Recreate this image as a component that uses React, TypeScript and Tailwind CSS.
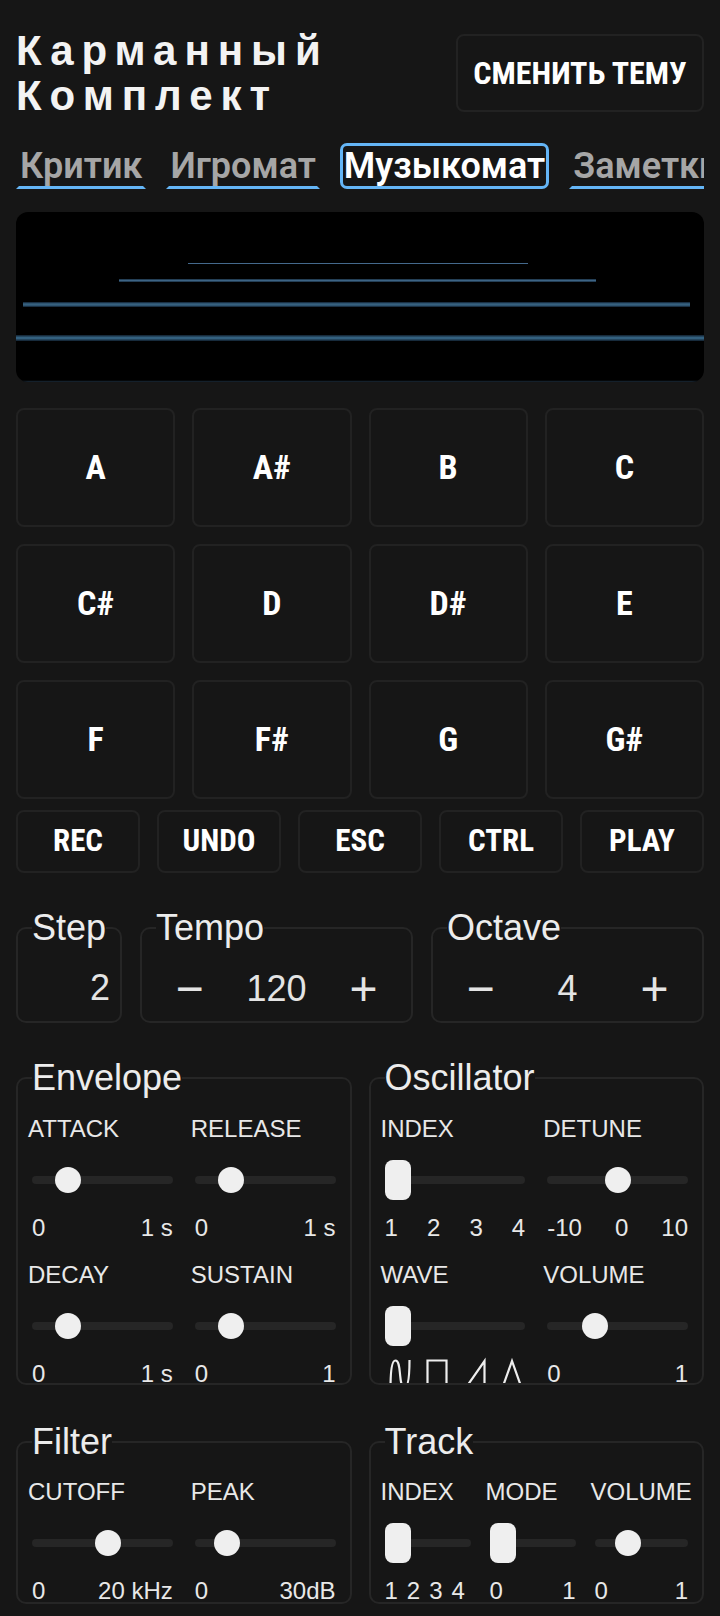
import React from "react";

// fonts
const SANS = "font-['Liberation_Sans',Arial,sans-serif]";
const COND = "font-['Roboto_Condensed','Liberation_Sans_Narrow','DejaVu_Sans_Condensed',sans-serif]";
const ROBOTO = "font-['Roboto','Liberation_Sans',sans-serif]";

const tabs = [
  { name: "Критик" },
  { name: "Игромат" },
  { name: "Музыкомат", active: true },
  { name: "Заметки" },
];

const notes = ["A", "A#", "B", "C", "C#", "D", "D#", "E", "F", "F#", "G", "G#"];
const actions = ["REC", "UNDO", "ESC", "CTRL", "PLAY"];

type Ctl = {
  label: string;
  value: number;
  rect?: boolean;
  marks?: string[];
  tight?: boolean;
  waves?: boolean;
};

const envelope: Ctl[] = [
  { label: "ATTACK", value: 0.2, marks: ["0", "1 s"] },
  { label: "RELEASE", value: 0.2, marks: ["0", "1 s"] },
  { label: "DECAY", value: 0.2, marks: ["0", "1 s"] },
  { label: "SUSTAIN", value: 0.2, marks: ["0", "1"] },
];

const oscillator: Ctl[] = [
  { label: "INDEX", value: 0, rect: true, marks: ["1", "2", "3", "4"] },
  { label: "DETUNE", value: 0.5, marks: ["-10", "0", "10"] },
  { label: "WAVE", value: 0, rect: true, waves: true },
  { label: "VOLUME", value: 0.3, marks: ["0", "1"] },
];

const filter: Ctl[] = [
  { label: "CUTOFF", value: 0.55, marks: ["0", "20 kHz"] },
  { label: "PEAK", value: 0.17, marks: ["0", "30dB"] },
];

const track: Ctl[] = [
  { label: "INDEX", value: 0, rect: true, marks: ["1", "2", "3", "4"], tight: true },
  { label: "MODE", value: 0, rect: true, marks: ["0", "1"] },
  { label: "VOLUME", value: 0.3, marks: ["0", "1"] },
];

function Slider({ value, rect }: { value: number; rect?: boolean }) {
  const left = `calc((100% - 26px) * ${value})`;
  return (
    <div className="relative mx-1 flex h-[40px] items-center">
      <div className="h-[8px] w-full rounded-full bg-[#262626]" />
      {rect ? (
        <div className="absolute top-0 h-[40px] w-[26px] rounded-[8px] bg-[#efefef]" style={{ left }} />
      ) : (
        <div className="absolute top-[7px] h-[26px] w-[26px] rounded-full bg-[#efefef]" style={{ left }} />
      )}
    </div>
  );
}

function Waves() {
  const cls = "h-[30px] w-[22px] overflow-visible";
  return (
    <div className="mt-[13px] flex justify-between pl-[8px] pr-[6px]">
      <svg viewBox="0 0 22 30" className={cls} fill="none" stroke="#eeeeee" strokeWidth="2.2">
        <path d="M1.5 30 C1.5 12 3 1.5 6.5 1.5 C10 1.5 10.5 10 11 15 C11.5 20 12 28.5 15.5 28.5 C19 28.5 20.5 18 20.5 1" />
      </svg>
      <svg viewBox="0 0 22 30" className={cls} fill="none" stroke="#eeeeee" strokeWidth="2.2">
        <path d="M1.5 30 V1.5 H20.5 V30" />
      </svg>
      <svg viewBox="0 0 22 30" className={cls} fill="none" stroke="#eeeeee" strokeWidth="2.2">
        <path d="M1 30 L20.5 2 V30" />
      </svg>
      <svg viewBox="0 0 22 30" className={cls} fill="none" stroke="#eeeeee" strokeWidth="2.2">
        <path d="M1 30 L11 2 L21 30" />
      </svg>
    </div>
  );
}

function Control({ c }: { c: Ctl }) {
  return (
    <div className="min-w-0">
      <div className="h-[26px] whitespace-nowrap text-[24px] leading-[26px]">{c.label}</div>
      <div className="mt-[18px]">
        <Slider value={c.value} rect={c.rect} />
      </div>
      {c.waves ? (
        <Waves />
      ) : (
        <div
          className={
            c.tight
              ? "mt-[19px] flex gap-[9px] whitespace-nowrap px-1 text-[24px] leading-[18px]"
              : "mt-[19px] flex justify-between whitespace-nowrap px-1 text-[24px] leading-[18px]"
          }
        >
          {c.marks?.map((m) => (
            <span key={m}>{m}</span>
          ))}
        </div>
      )}
    </div>
  );
}

function Group({ title, children, inner }: { title: string; children: React.ReactNode; inner: string }) {
  return (
    <fieldset className="min-w-0 rounded-[10px] border-2 border-[#262626]">
      <legend className="ml-[14px] text-[36px] leading-[40px] text-[#ececec]">{title}</legend>
      <div className={inner}>{children}</div>
    </fieldset>
  );
}

function Visualizer() {
  return (
    <div className="mt-[23px] h-[170px] overflow-hidden rounded-[12px] bg-black">
      <svg viewBox="0 0 688 170" preserveAspectRatio="none" className="block h-full w-full">
        <line x1="172" y1="51.5" x2="512" y2="51.5" stroke="#44698c" strokeWidth="1.2" />
        <line x1="103" y1="68.5" x2="580" y2="68.5" stroke="#1c3347" strokeWidth="3" />
        <line x1="103" y1="68.5" x2="580" y2="68.5" stroke="#3d6485" strokeWidth="1.4" />
        <line x1="7" y1="92.5" x2="674" y2="92.5" stroke="#1a3044" strokeWidth="5" />
        <line x1="7" y1="92.5" x2="674" y2="92.5" stroke="#36607f" strokeWidth="2.4" />
        <line x1="0" y1="126" x2="688" y2="126" stroke="#172b3c" strokeWidth="6" />
        <line x1="0" y1="126" x2="688" y2="126" stroke="#33607f" strokeWidth="3" />
        <line x1="0" y1="169.5" x2="688" y2="169.5" stroke="#14202b" strokeWidth="1.5" />
      </svg>
    </div>
  );
}

export default function App() {
  return (
    <div className={`min-h-screen bg-[#161616] px-4 pb-[12px] text-[#e8e8e8] ${SANS}`}>
      {/* Header */}
      <div className="flex items-center justify-between pt-[28px]">
        <h1 className="text-[42px] font-bold leading-[45px] tracking-[0.19em] text-[#f3f3f3]">
          Карманный
          <br />
          Комплект
        </h1>
        <button
          className={`h-[78px] w-[248px] rounded-[8px] border-2 border-[#222222] text-[32px] font-bold text-white ${COND}`}
        >
          СМЕНИТЬ ТЕМУ
        </button>
      </div>

      {/* Tabs */}
      <div className={`mt-[25px] flex gap-[20px] overflow-hidden whitespace-nowrap ${ROBOTO}`}>
        {tabs.map((t) => (
          <div
            key={t.name}
            className={
              t.active
                ? "h-[46px] shrink-0 rounded-[7px] border-[3px] border-[#64b5f6] px-[1px] text-[36px] font-semibold leading-[40px] text-white"
                : "h-[46px] shrink-0 border-[3px] border-transparent border-b-[#64b5f6] px-[1px] text-[36px] font-semibold leading-[40px] text-[#a6a6a6]"
            }
          >
            {t.name}
          </div>
        ))}
      </div>

      <Visualizer />

      {/* Note pads */}
      <div className={`mt-[26px] grid grid-cols-4 gap-[17px] ${COND}`}>
        {notes.map((n) => (
          <button
            key={n}
            className="flex h-[119px] items-center justify-center rounded-[8px] border-2 border-[#222222] text-[34px] font-bold text-white"
          >
            {n}
          </button>
        ))}
      </div>

      {/* Transport */}
      <div className={`mt-[11px] grid grid-cols-5 gap-[17px] ${COND}`}>
        {actions.map((a) => (
          <button
            key={a}
            className="flex h-[63px] items-center justify-center rounded-[8px] border-2 border-[#222222] text-[31px] font-bold text-white"
          >
            {a}
          </button>
        ))}
      </div>

      {/* Step / Tempo / Octave */}
      <div className="mt-[35px] grid grid-cols-[106px_1fr_1fr] gap-[18px]">
        <Group title="Step" inner="h-[73px] pr-[10px] pt-[20px] text-right text-[36px] leading-[40px] text-[#e4e4e4]">
          2
        </Group>
        <Group title="Tempo" inner="grid h-[73px] grid-cols-3 items-center px-[4px] pt-[14px] pb-[6px] text-center text-[36px] leading-[40px] text-[#e4e4e4]">
          <span className="text-[48px]">−</span>
          <span>120</span>
          <span className="text-[48px]">+</span>
        </Group>
        <Group title="Octave" inner="grid h-[73px] grid-cols-3 items-center px-[4px] pt-[14px] pb-[6px] text-center text-[36px] leading-[40px] text-[#e4e4e4]">
          <span className="text-[48px]">−</span>
          <span>4</span>
          <span className="text-[48px]">+</span>
        </Group>
      </div>

      {/* Envelope / Oscillator */}
      <div className="mt-[35px] grid grid-cols-2 gap-[17px]">
        <Group title="Envelope" inner="grid h-[285px] grid-cols-2 content-start gap-x-[14px] gap-y-[25px] overflow-hidden px-[10px] pt-[18px]">
          {envelope.map((c) => (
            <Control key={c.label} c={c} />
          ))}
        </Group>
        <Group title="Oscillator" inner="grid h-[285px] grid-cols-2 content-start gap-x-[14px] gap-y-[25px] overflow-hidden px-[10px] pt-[18px]">
          {oscillator.map((c) => (
            <Control key={c.label} c={c} />
          ))}
        </Group>
      </div>

      {/* Filter / Track */}
      <div className="mt-[37px] grid grid-cols-2 gap-[17px]">
        <Group title="Filter" inner="grid h-[140px] grid-cols-2 content-start gap-x-[14px] overflow-hidden px-[10px] pt-[17px]">
          {filter.map((c) => (
            <Control key={c.label} c={c} />
          ))}
        </Group>
        <Group title="Track" inner="grid h-[140px] grid-cols-[94px_94px_1fr] content-start gap-x-[11px] overflow-hidden px-[10px] pt-[17px]">
          {track.map((c) => (
            <Control key={c.label} c={c} />
          ))}
        </Group>
      </div>
    </div>
  );
}
